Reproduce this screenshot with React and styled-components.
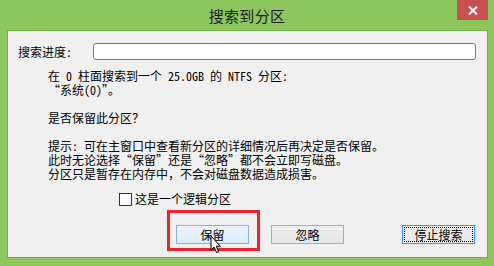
import React from "react";
import styled, { createGlobalStyle } from "styled-components";

const Global = createGlobalStyle`
  html, body { margin: 0; padding: 0; background: #8cc65d; }
  body { font-family: "Noto Sans CJK SC", "Noto Sans", sans-serif; }
`;

const Window = styled.div`
  width: 494px;
  height: 266px;
  background: #8cc65d;
  display: flex;
  flex-direction: column;
  box-sizing: border-box;
  padding: 0 7px 9px 8px;
`;

const TitleBar = styled.div`
  height: 31px;
  display: grid;
  grid-template-columns: 1fr auto 1fr;
  align-items: start;
  margin: 0 -7px 0 -8px;
`;

const Title = styled.div`
  grid-column: 2;
  font-size: 15px;
  line-height: 31px;
  color: #1c1c1c;
  letter-spacing: 0.3px;
`;

const Close = styled.div`
  grid-column: 3;
  justify-self: end;
  margin-right: 6px;
  width: 31px;
  height: 20px;
  background: #c75050;
  display: flex;
  align-items: center;
  justify-content: center;
`;

const Client = styled.div`
  flex: 1;
  background: #f0f0f0;
  box-shadow: 0 0 0 1px #74b048;
  display: flex;
  flex-direction: column;
  font-family: "Noto Sans Mono CJK SC", "Noto Sans CJK SC", monospace;
  font-size: 12px;
  color: #000;
`;

const ProgressRow = styled.div`
  margin-top: 12px;
  height: 17px;
  display: flex;
  align-items: center;
  padding: 0 11px 0 10px;
`;

const Label = styled.div`
  width: 75px;
  line-height: 17px;
`;

const ProgressBox = styled.div`
  flex: 1;
  height: 15px;
  background: #fff;
  border: 1px solid #7a7a7a;
  border-radius: 3px;
`;

const Message = styled.div`
  margin-top: 9px;
  padding-left: 40px;
  line-height: 14px;
`;

const Para = styled.p`
  margin: 0 0 ${(p) => p.$gap ?? 14}px 0;
  white-space: pre;
`;

const CheckRow = styled.label`
  display: flex;
  align-items: center;
  gap: 3px;
  padding-left: 111px;
  margin-top: 11px;
  line-height: 14px;
`;

const Box = styled.span`
  width: 11px;
  height: 11px;
  border: 1px solid #333;
  background: #fff;
`;

const ButtonRow = styled.div`
  margin-top: 19px;
  display: flex;
  justify-content: flex-end;
  padding-right: 12px;
  gap: 22px;
`;

const Button = styled.div`
  position: relative;
  width: 73px;
  height: 19px;
  box-sizing: border-box;
  display: flex;
  align-items: center;
  justify-content: center;
  font-size: 12px;
  border: 1px solid ${(p) => (p.$hover ? "#7eb4ea" : p.$default ? "#3399ff" : "#acacac")};
  background: ${(p) =>
    p.$hover
      ? "linear-gradient(#ecf4fc, #dcecfc)"
      : "linear-gradient(#f0f0f0, #e5e5e5)"};
  margin-left: ${(p) => p.$push ?? 0}px;
`;

const Focus = styled.span`
  position: absolute;
  inset: 1px;
  border: 1px dotted #000;
`;

const Highlight = styled.span`
  position: absolute;
  left: -10px;
  top: -16px;
  width: 93px;
  height: 41px;
  border: 3px solid #e8262b;
  box-sizing: border-box;
  pointer-events: none;
`;

const Cursor = styled.svg`
  position: absolute;
  left: 33px;
  top: 9px;
`;

export default function App() {
  return (
    <>
      <Global />
      <Window>
        <TitleBar>
          <Title>搜索到分区</Title>
          <Close>
            <svg width="10" height="9" viewBox="0 0 10 9">
              <path d="M1 0.5 L9 8.5 M9 0.5 L1 8.5" stroke="#fff" strokeWidth="2" />
            </svg>
          </Close>
        </TitleBar>
        <Client>
          <ProgressRow>
            <Label>搜索进度:</Label>
            <ProgressBox />
          </ProgressRow>
          <Message>
            <Para $gap={14}>
              {"在 0 柱面搜索到一个 25.0GB 的 NTFS 分区:\n“系统(0)”。"}
            </Para>
            <Para>是否保留此分区？</Para>
            <Para $gap={0}>
              {"提示: 可在主窗口中查看新分区的详细情况后再决定是否保留。\n此时无论选择“保留”还是“忽略”都不会立即写磁盘。\n分区只是暂存在内存中，不会对磁盘数据造成损害。"}
            </Para>
          </Message>
          <CheckRow>
            <Box />
            <span>这是一个逻辑分区</span>
          </CheckRow>
          <ButtonRow>
            <Button $hover>
              保留
              <Highlight />
              <Cursor width="13" height="20" viewBox="0 0 13 20">
                <path d="M1.5 1.5 L1.5 15.5 L4.5 12.5 L7 18 L9 17 L6.7 11.7 L10.8 11.7 Z" fill="rgba(0,0,0,0.25)" transform="translate(1,1)" />
                <path d="M1 1 L1 15 L4 12 L6.5 17.5 L8.5 16.5 L6.2 11.2 L10.3 11.2 Z" fill="#fff" stroke="#000" strokeWidth="1" />
              </Cursor>
            </Button>
            <Button>忽略</Button>
            <Button $default $push={36}>
              停止搜索
              <Focus />
            </Button>
          </ButtonRow>
        </Client>
      </Window>
    </>
  );
}
